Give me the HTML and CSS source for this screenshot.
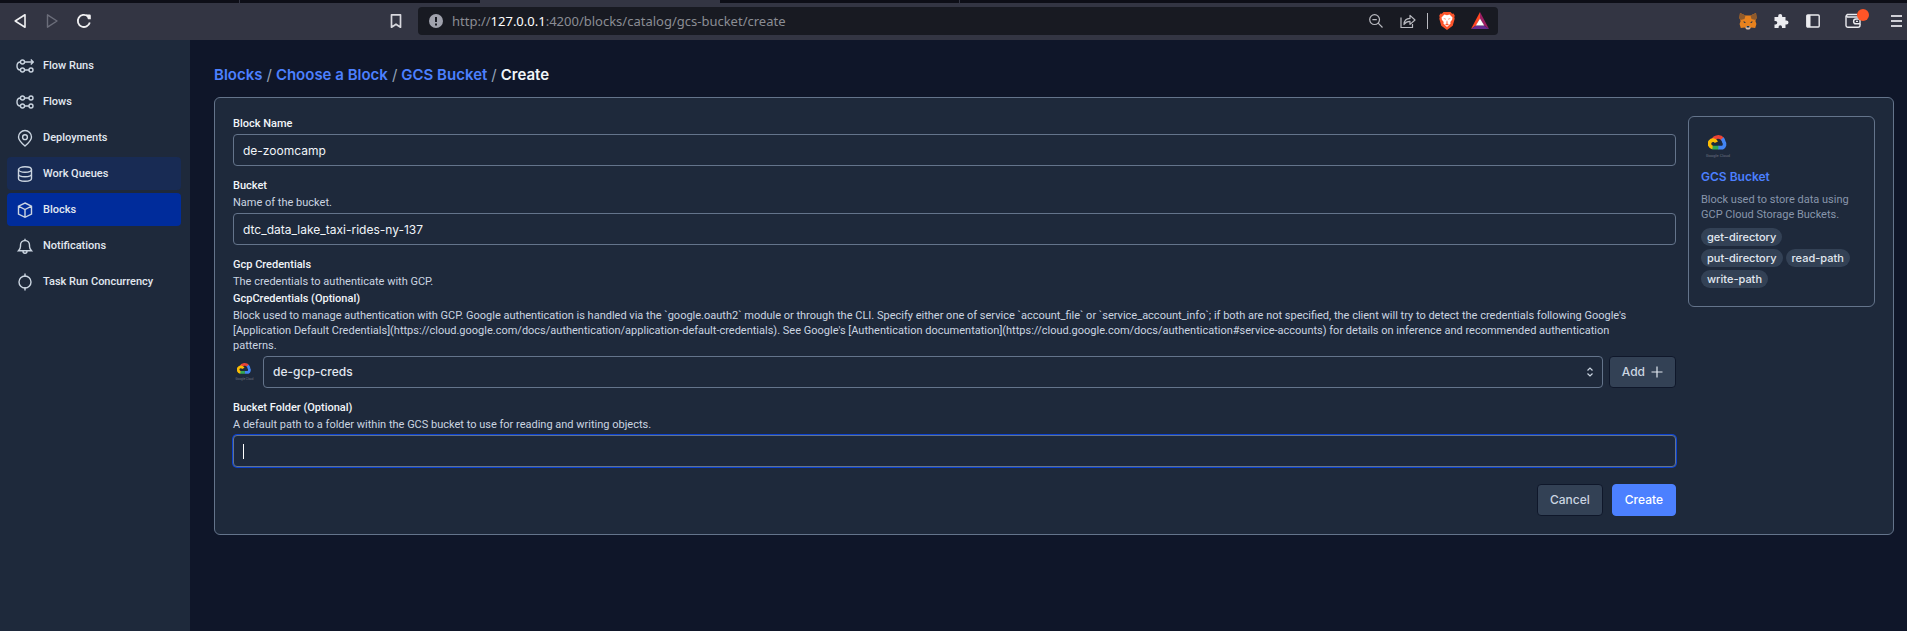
FILE: index.html
```html
<!DOCTYPE html>
<html lang="en">
<head>
<meta charset="utf-8">
<title>Create GCS Bucket block</title>
<link rel="stylesheet" href="styles.css">
</head>
<body>
<svg class="defs" aria-hidden="true">
  <symbol id="gcloud" viewBox="0 0 36 36">
    <g fill="none" stroke-width="4">
      <path stroke="#ea4335" d="M12.2 12.6A6.6 6.6 0 0 1 23.4 11.4"/>
      <path stroke="#4285f4" d="M22.6 10.6Q24.2 12.4 24.5 14.4A4.2 4.2 0 0 1 23 20.6H18"/>
      <path stroke="#34a853" d="M18.4 20.6H13Q11.8 20.6 11 20"/>
      <path stroke="#fbbc04" d="M12 20.3A4 4 0 1 1 16.2 14.6"/>
    </g>
  </symbol>
</svg>

<header class="browser">
  <div class="tabs"><span></span><span></span><span class="active"></span><span></span></div>
  <div class="toolbar">
    <div class="nav-buttons">
      <button aria-label="Back"><svg width="16" height="16" viewBox="0 0 16 16"><path d="M13 1.8v12.4L3.2 8z" fill="none" stroke="#f0f0f2" stroke-width="1.6" stroke-linejoin="round"/></svg></button>
      <button aria-label="Forward"><svg width="16" height="16" viewBox="0 0 16 16"><path d="M3.500 1.800v12.400L13 8z" fill="none" stroke="#6b6d7a" stroke-width="1.400" stroke-linejoin="round"/></svg></button>
      <button aria-label="Reload"><svg width="16" height="16" viewBox="0 0 16 16"><path d="M13.800 9.500A6.100 6.100 0 1 1 11.800 3.200" fill="none" stroke="#f0f0f2" stroke-width="1.800"/><path d="M10 1.600h3.600q1.200 0 1.200 1.200v3.400H12z" fill="#f0f0f2"/></svg></button>
    </div>
    <button class="bookmark" aria-label="Bookmark"><svg width="16" height="16" viewBox="0 0 16 16"><path d="M3.500 1.800h9v12.400L8 11.200l-4.500 3z" fill="none" stroke="#d8d8de" stroke-width="1.700" stroke-linejoin="round"/></svg></button>
    <div class="address">
      <svg width="14" height="14" viewBox="0 0 14 14"><circle cx="7" cy="7" r="7" fill="#a0a2ad"/><path d="M7 3v5M7 9.600v1.800" stroke="#181a22" stroke-width="2"/></svg>
      <span class="url">http://<b>127.0.0.1</b>:4200/blocks/catalog/gcs-bucket/create</span>
      <div class="address-tools">
        <button aria-label="Zoom"><svg width="16" height="16" viewBox="0 0 16 16" fill="none" stroke="#b9bac0" stroke-width="1.200"><circle cx="6.600" cy="6.600" r="4.900"/><path d="M4.400 6.600h4.400M10.200 10.200l4.300 4.300"/></svg></button>
        <button aria-label="Share"><svg width="16" height="16" viewBox="0 0 16 16" fill="none" stroke="#b9bac0" stroke-width="1.200"><path d="M1 4.500v10h11.500V11"/><path d="M4 11.500Q4.200 5.600 10 5.400V2.400l5 4.600-5 4.400V8.400Q6.500 8.300 4 11.500z" stroke-linejoin="round"/></svg></button>
        <i class="divider"></i>
        <button aria-label="Brave Shields"><svg width="16" height="18" viewBox="0 0 16 18"><path d="M4.500 0h7l1.600 1.700 1.400-.1 1.300 2.200-.5 1.400.4 1.500-2 7L8 18l-5.700-4.300-2-7 .4-1.500L.2 3.800l1.300-2.200 1.400.1z" fill="#fb542b"/><path d="M8 3.200l2.600-.6 2.900 3-.4 2.200-1.800 2.200.3 1.400L8 15l-3.600-3.600.3-1.400L2.900 7.800l-.4-2.200 2.900-3z" fill="#fff"/><path d="M4.200 6.200l2.500.6-.2 1zM11.800 6.200l-2.500.6.2 1zM8 8l.6 2.600L8 11.200l-.6-.6zM6 12.200l2-1 2 1-2 1.400z" fill="#fb542b"/></svg></button>
        <button aria-label="Brave Rewards"><svg width="18" height="18" viewBox="0 0 18 18"><path d="M9 0L0 17l5-3.500L9 6.500z" fill="#ff4724"/><path d="M9 0l9 17-5-3.500L9 6.500z" fill="#9e1f63"/><path d="M0 17h18l-5-3.500H5z" fill="#662d91"/><path d="M9 6.500l4.200 7H4.800z" fill="#fff"/></svg></button>
      </div>
    </div>
    <div class="extensions">
      <button aria-label="MetaMask"><svg width="18" height="18" viewBox="0 0 18 18"><path d="M1 1l5.500 2.500h5L17 1l.6 5-1.200 3 1 3-1.200 4-4-.6L10.500 17h-3l-1.700-1.600-4 .6L.6 12l1-3L.4 6z" fill="#e8821e"/><path d="M1 1l5.500 2.500L5.500 7 1.500 8 .4 6zM17 1l-5.500 2.500 1 3.500 4 1 1.100-2z" fill="#8e5a2c"/><path d="M4.500 9l2.500 1.400-2 .5zM13.500 9L11 10.400l2 .5z" fill="#233447"/><path d="M7 14h4l.3 2.500-1 1H7.700l-1-1z" fill="#d5bfb2"/><path d="M7.600 14h2.800v1.500H7.600z" fill="#233447"/></svg></button>
      <button aria-label="Extensions"><svg width="16" height="16" viewBox="0 0 16 16"><path d="M1.500 4h3.700V3a2 2 0 0 1 4 0v1h3.300v3.500h1a2 2 0 0 1 0 4h-1V15H9v-1a1.700 1.700 0 0 0-3.400 0v1H1.500v-3.500h1a1.800 1.800 0 0 0 0-3.600h-1z" fill="#ececf0"/></svg></button>
      <button aria-label="Sidebar"><svg width="16" height="16" viewBox="0 0 16 16"><rect x="1.800" y="2" width="12.400" height="12" rx="1" fill="none" stroke="#ececf0" stroke-width="1.400"/><path d="M2 2h3.500v12H2z" fill="#ececf0"/></svg></button>
      <button class="wallet" aria-label="Wallet"><svg width="18" height="16" viewBox="0 0 18 16" fill="none" stroke="#ececf0" stroke-width="1.400"><path d="M16 6V4H3.500a1.300 1.300 0 0 1 0-2.500H13"/><path d="M2 2.500v10q0 1.700 1.700 1.700H14q2 0 2-2V11"/><path d="M16 6h-4a2.300 2.300 0 0 0 0 4.800h4zM12 8.400h2"/></svg><i class="badge"></i></button>
      <button class="menu" aria-label="Menu"><svg width="11" height="14" viewBox="0 0 11 14"><path d="M0 2h11M0 7h11M0 12h11" stroke="#cfcfd6" stroke-width="1.800"/></svg></button>
    </div>
  </div>
</header>

<div class="app">
  <nav class="sidebar">
    <a href="#"><svg viewBox="0 0 18 18"><circle cx="6.500" cy="5" r="2"/><circle cx="6.500" cy="13" r="2"/><circle cx="15" cy="13" r="2"/><path d="M8.500 5H17M14.800 2.500L17.300 5l-2.500 2.500M8.500 13H13M4.500 5Q1 5 1 9t3.500 4"/></svg>Flow Runs</a>
    <a href="#"><svg viewBox="0 0 18 18"><circle cx="6.500" cy="5" r="2"/><circle cx="15" cy="5" r="2"/><circle cx="6.500" cy="13" r="2"/><circle cx="15" cy="13" r="2"/><path d="M8.500 5H13M8.500 13H13M4.500 5Q1 5 1 9t3.500 4"/></svg>Flows</a>
    <a href="#"><svg viewBox="0 0 18 18"><path d="M9 17C6 14.500 2.500 11.500 2.500 8a6.500 6.500 0 0 1 13 0c0 3.500-3.500 6.500-6.500 9z"/><circle cx="9" cy="8.200" r="2.400"/></svg>Deployments</a>
    <a href="#" class="hover"><svg viewBox="0 0 18 18"><ellipse cx="9" cy="4.500" rx="6.500" ry="2.700"/><path d="M2.500 4.500v9c0 1.500 2.900 2.700 6.500 2.700s6.500-1.200 6.500-2.700v-9M2.500 9c0 1.500 2.900 2.700 6.500 2.700s6.500-1.200 6.500-2.700"/></svg>Work Queues</a>
    <a href="#" class="current" aria-current="page"><svg viewBox="0 0 18 18"><path d="M9 2l6.500 3.200v7.800L9 16.300 2.500 13V5.200zM2.500 5.200L9 8.500l6.500-3.300M9 8.500v7.800"/></svg>Blocks</a>
    <a href="#"><svg viewBox="0 0 18 18"><path d="M2.500 13.800h13c-1.300-1.300-2-2.500-2-4.600V8a4.500 4.500 0 0 0-9 0v1.200c0 2.100-.7 3.300-2 4.600zM7 14.200a2 2 0 0 0 4 0M9 1.800v1.700"/></svg>Notifications</a>
    <a href="#"><svg viewBox="0 0 18 18"><circle cx="9" cy="9" r="6"/><path d="M9 .5V4M9 14v3.500"/></svg>Task Run Concurrency</a>
  </nav>

  <main class="main">
    <h1 class="crumbs"><a href="#">Blocks</a><i>/</i><a href="#">Choose a Block</a><i>/</i><a href="#">GCS Bucket</a><i>/</i><span>Create</span></h1>

    <div class="card">
      <form class="form">
        <div class="field">
          <label for="name">Block Name</label>
          <input id="name" class="control" type="text" value="de-zoomcamp">
        </div>
        <div class="field">
          <label for="bucket">Bucket</label>
          <p>Name of the bucket.</p>
          <input id="bucket" class="control" type="text" value="dtc_data_lake_taxi-rides-ny-137">
        </div>
        <div class="field">
          <strong>Gcp Credentials</strong>
          <p>The credentials to authenticate with GCP.</p>
          <label for="creds">GcpCredentials (Optional)</label>
          <p>Block used to manage authentication with GCP. Google authentication is handled via the `google.oauth2` module or through the CLI. Specify either one of service `account_file` or `service_account_info`; if both are not specified, the client will try to detect the credentials following Google's [Application Default Credentials](https://cloud.google.com/docs/authentication/application-default-credentials). See Google's [Authentication documentation](https://cloud.google.com/docs/authentication#service-accounts) for details on inference and recommended authentication <br>patterns.</p>
          <div class="creds">
            <div class="logo small"><svg viewBox="7 7 22 17"><use href="#gcloud" width="36" height="36"/></svg><span>Google Cloud</span></div>
            <div class="select">
              <select id="creds" class="control"><option>de-gcp-creds</option></select>
              <svg width="8" height="10" viewBox="0 0 8 10"><path d="M1.500 3.500L4 1l2.500 2.500M1.500 6.500L4 9l2.500-2.500" fill="none" stroke="#cbd5e1" stroke-width="1.200"/></svg>
            </div>
            <button type="button" class="button">Add <svg width="12" height="12" viewBox="0 0 12 12"><path d="M6 .5v11M.5 6h11" stroke="#e2e8f0" stroke-width="1.200"/></svg></button>
          </div>
        </div>
        <div class="field">
          <label for="folder">Bucket Folder (Optional)</label>
          <p>A default path to a folder within the GCS bucket to use for reading and writing objects.</p>
          <input id="folder" class="control focused" type="text">
        </div>
        <div class="actions">
          <button type="button" class="button">Cancel</button>
          <button type="submit" class="button primary">Create</button>
        </div>
      </form>

      <aside class="summary">
        <div class="logo"><svg viewBox="7 7 22 17"><use href="#gcloud" width="36" height="36"/></svg><span>Google Cloud</span></div>
        <a href="#">GCS Bucket</a>
        <p>Block used to store data using GCP Cloud Storage Buckets.</p>
        <div class="tags"><span>get-directory</span><span>put-directory</span><span>read-path</span><span>write-path</span></div>
      </aside>
    </div>
  </main>
</div>
</body>
</html>
```

FILE: styles.css
```css
* { box-sizing: border-box; }

body {
  margin: 0;
  min-height: 100vh;
  display: flex;
  flex-direction: column;
  background: #0f1629;
  color: #e2e8f0;
  font: 11px/15px Roboto, "Liberation Sans", sans-serif;
}

p, h1 { margin: 0; }
a { text-decoration: none; }
button { padding: 0; border: 0; background: none; font: inherit; color: inherit; }
svg { display: block; }
.defs { position: absolute; width: 0; height: 0; }

/* Browser chrome */
.browser { background: #333543; }
.tabs { display: flex; height: 3px; background: #0d0e17; }
.tabs span { width: 240px; }
.tabs span:first-child, .tabs span:last-child { border-right: 1px solid #333543; }
.tabs .active { background: #333543; }

.toolbar { display: flex; align-items: center; height: 37px; padding: 0 5px 2px 12px; }
.nav-buttons { display: flex; flex: none; gap: 16px; }
.bookmark { margin-left: auto; }
.address {
  display: flex;
  align-items: center;
  width: 1080px;
  height: 28px;
  margin-left: 14px;
  padding: 0 9px 0 11px;
  border-radius: 4px;
  background: #181a22;
}
.url { margin-left: 9px; color: #8b8d94; font: 13px/20px "Noto Sans", sans-serif; }
.url b { color: #fff; font-weight: 400; }
.address-tools { display: flex; align-items: center; gap: 16px; margin-left: auto; }
.divider { width: 1px; height: 16px; margin: 0 -5px; background: #b9bac0; }
.extensions { display: flex; align-items: center; gap: 16px; margin-left: 241px; }
.wallet { position: relative; margin: 0 13px 0 7px; }
.badge { position: absolute; top: -4px; right: -7px; width: 12px; height: 12px; border-radius: 6px; background: #ff5527; }

/* Application */
.app { display: flex; flex: 1; }
.sidebar {
  display: flex;
  flex: none;
  flex-direction: column;
  gap: 3px;
  width: 190px;
  padding: 9px 9px 9px 7px;
  background: #1e293b;
}
.sidebar a {
  display: flex;
  align-items: center;
  gap: 9px;
  height: 33px;
  padding: 0 9px;
  border-radius: 4px;
  color: #e2e8f0;
  font-weight: 500;
}
.sidebar svg { width: 18px; height: 18px; fill: none; stroke: #cbd5e1; stroke-width: 1.4; }
.sidebar .hover { background: #182b54; }
.sidebar .current { background: #002c9b; }

.main { flex: 1; min-width: 0; padding: 24px 13px 24px 24px; }
.crumbs { display: flex; gap: 4px; margin-bottom: 11px; font: 600 15px/22px Inter, "Liberation Sans", sans-serif; color: #f1f5f9; }
.crumbs a { color: #4c80ff; }
.crumbs i { color: #94a3b8; font-style: normal; font-weight: 400; }

.card {
  display: flex;
  align-items: flex-start;
  gap: 12px;
  padding: 18px;
  border: 1px solid #64748b;
  border-radius: 6px;
  background: #1e293b;
}
.form { display: flex; flex: 1; flex-direction: column; gap: 12px; min-width: 0; }
.field { display: flex; flex-direction: column; gap: 2px; color: #cbd5e1; }
.field label, .field strong { color: #f1f5f9; font-weight: 500; }
.control {
  width: 100%;
  height: 32px;
  margin-top: 1px;
  padding: 0 9px;
  border: 1px solid #64748b;
  border-radius: 4px;
  outline: 0;
  background: #1e293b;
  color: #f1f5f9;
  font: 12px/18px Inter, "Liberation Sans", sans-serif;
}
.focused {
  box-shadow: 0 0 0 1px #0b41cf;
  background: linear-gradient(#fff, #fff) 9px 8px / 1px 15px no-repeat #1e293b;
}
.creds { display: flex; align-items: center; margin-top: 1px; }
.creds .control { margin: 0; }
.select { position: relative; flex: 1; margin: 0 6px 0 7px; }
.select select { display: block; appearance: none; font-weight: 500; color: #e2e8f0; }
.select svg { position: absolute; top: 11px; right: 9px; pointer-events: none; }

.button {
  display: inline-flex;
  align-items: center;
  justify-content: center;
  gap: 6px;
  height: 32px;
  padding: 0 12px;
  border: 1px solid #0f172a;
  border-radius: 4px;
  background: #334155;
  color: #cbd5e1;
  font: 500 12px/18px Inter, "Liberation Sans", sans-serif;
}
.primary { border-color: #4c80ff; background: #4c80ff; color: #fff; }
.actions { display: flex; justify-content: flex-end; gap: 9px; padding-top: 5px; }

.logo { display: flex; flex-direction: column; align-items: center; gap: 2px; width: 34px; }
.logo svg { width: 20px; height: 16px; }
.logo span { color: #6b7280; font-size: 4px; line-height: 5px; white-space: nowrap; }
.small { width: 23px; }
.small svg { width: 15px; height: 12px; }
.small span { font-size: 3px; }

.summary {
  display: flex;
  flex-direction: column;
  align-items: flex-start;
  width: 187px;
  padding: 18px 12px;
  border: 1px solid #64748b;
  border-radius: 6px;
  color: #8896ab;
}
.summary a { margin: 10px 0 6px; color: #4c80ff; font: 600 12px/18px Inter, "Liberation Sans", sans-serif; }
.tags { display: flex; flex-wrap: wrap; gap: 3px; margin-top: 6px; }
.tags span { padding: 0 6px; border-radius: 9px; background: #334155; color: #e2e8f0; font: 500 11px/18px Inter, "Liberation Sans", sans-serif; }
```
